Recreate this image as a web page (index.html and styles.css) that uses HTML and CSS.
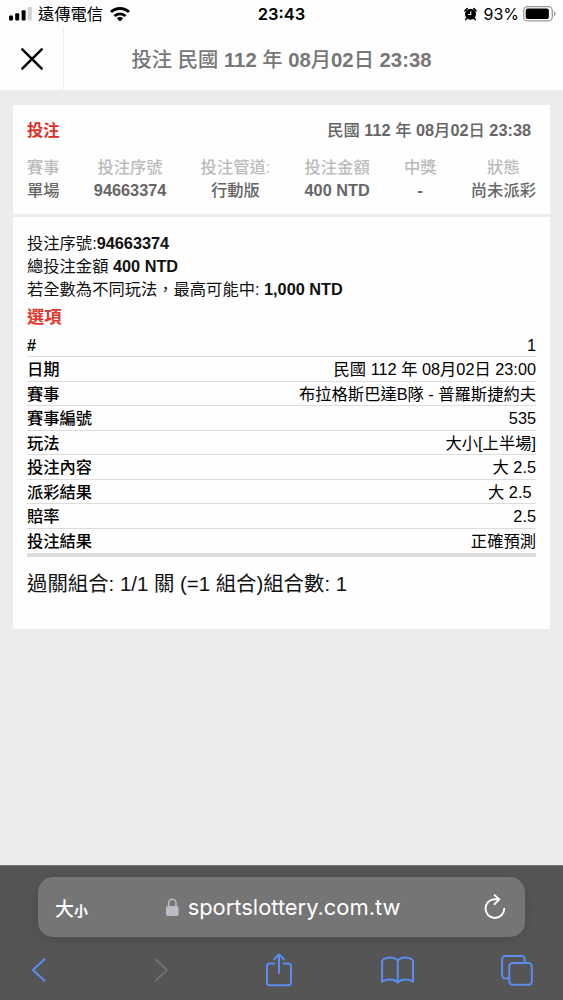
FILE: index.html
```html
<!DOCTYPE html>
<html lang="zh-Hant">
<head>
  <meta charset="UTF-8" />
  <meta name="viewport" content="width=device-width, initial-scale=1.0"/>
  <title>投注</title>
  <link rel="stylesheet" href="styles.css">
</head>
<body>
  <div class="statusbar">
    <div class="carrier">
      <svg class="signal" width="23" height="14" viewBox="0 0 23 14">
        <rect x="0" y="8.5" width="4" height="5" rx="1"/>
        <rect x="6.2" y="6.3" width="4" height="7.2" rx="1"/>
        <rect x="12.6" y="3.3" width="4" height="10.2" rx="1"/>
        <rect x="18.8" y="0" width="4" height="13.5" rx="1" fill="#d0d0d0"/>
      </svg>
      <span>遠傳電信</span>
      <svg class="wifi" width="20" height="15" viewBox="0 0 20 15">
        <g fill="none" stroke="#000" stroke-width="2.8">
          <path d="M1 5.1a13 13 0 0 1 18 0"/>
          <path d="M4.5 9a8 8 0 0 1 11 0"/>
        </g>
        <path d="M10 14.6 6.8 11.3a4.6 4.6 0 0 1 6.4 0z"/>
      </svg>
    </div>
    <div class="clock">23:43</div>
    <div class="power">
      <svg width="13" height="14" viewBox="0 0 14 14">
        <circle cx="7" cy="7.2" r="5.9"/>
        <path d="M1 3.6 3.4 1.2M13 3.6 10.6 1.2M3.2 11.5 1.9 13M10.8 11.5l1.3 1.5" stroke="#000" stroke-width="1.7" stroke-linecap="round"/>
        <path d="M7.3 4v3.6H4.4" fill="none" stroke="#fff" stroke-width="1.1"/>
      </svg>
      <span>93%</span>
      <svg class="battery" width="33" height="16" viewBox="0 0 33 16">
        <rect x=".7" y=".7" width="28.6" height="14.2" rx="4" fill="none" stroke="#999" stroke-width="1.3"/>
        <rect x="2.7" y="2.5" width="23.2" height="10.6" rx="2.2"/>
        <path d="M31 5.3c2 .8 2 4.2 0 5z" fill="#999"/>
      </svg>
    </div>
  </div>

  <div class="header">
    <button class="close">
      <svg width="24" height="24" viewBox="0 0 24 24">
        <path d="M2.3 2.3 21.7 21.7M21.7 2.3 2.3 21.7" stroke="#000" stroke-width="2.5" stroke-linecap="round"/>
      </svg>
    </button>
    <h1>投注 民國 <b>112</b> 年 <b>08</b>月<b>02</b>日 <b>23:38</b></h1>
  </div>

  <div class="main">
    <div class="card">
      <div class="summary">
        <div class="summary-top">
          <span class="red">投注</span>
          <span class="date">民國 <b>112</b> 年 <b>08</b>月<b>02</b>日 <b>23:38</b></span>
        </div>
        <div class="columns">
          <div class="col"><span>賽事</span><em>單場</em></div>
          <div class="col"><span>投注序號</span><b>94663374</b></div>
          <div class="col"><span>投注管道:</span><em>行動版</em></div>
          <div class="col"><span>投注金額</span><b>400 NTD</b></div>
          <div class="col"><span>中獎</span><b>-</b></div>
          <div class="col"><span>狀態</span><em>尚未派彩</em></div>
        </div>
      </div>

      <div class="details">
        <p>投注序號:<b>94663374</b></p>
        <p>總投注金額 <b>400 NTD</b></p>
        <p>若全數為不同玩法，最高可能中: <b>1,000 NTD</b></p>
        <h2>選項</h2>
        <div class="rows">
          <div class="row"><b>#</b><span>1</span></div>
          <div class="row"><em>日期</em><span>民國 112 年 08月02日 23:00</span></div>
          <div class="row"><em>賽事</em><span>布拉格斯巴達B隊 - 普羅斯捷約夫</span></div>
          <div class="row"><em>賽事編號</em><span>535</span></div>
          <div class="row"><em>玩法</em><span>大小[上半場]</span></div>
          <div class="row"><em>投注內容</em><span>大 2.5</span></div>
          <div class="row"><em>派彩結果</em><span>大 2.5&nbsp;</span></div>
          <div class="row"><em>賠率</em><span>2.5</span></div>
          <div class="row"><em>投注結果</em><span>正確預測</span></div>
        </div>
        <div class="combo">過關組合: 1/1 關 (=1 組合)組合數: 1</div>
      </div>
    </div>
  </div>

  <div class="browser">
    <div class="address">
      <div class="textsize">大<small>小</small></div>
      <div class="url">
        <svg width="13" height="19" viewBox="0 0 13 19">
          <rect x="0" y="8" width="12.6" height="10" rx="1.8" fill="#bcbbc3"/>
          <path d="M2.6 8.5V5a3.7 3.7 0 0 1 7.4 0v3.5" fill="none" stroke="#bcbbc3" stroke-width="1.6"/>
        </svg>
        <span>sportslottery.com.tw</span>
      </div>
      <svg class="reload" width="22" height="26" viewBox="0 0 22 26" fill="none" stroke="#fff" stroke-width="1.9" stroke-linecap="round" stroke-linejoin="round">
        <path d="M20.3 14.6a9.4 9.4 0 1 1-9.4-9.4h4.2"/>
        <path d="M10.6 1.1l4.7 4.3-4.7 4.8"/>
      </svg>
    </div>
    <div class="toolbar">
      <svg width="34" height="26" viewBox="-9 0 34 26"><path d="M14 1.7 2 13l12 11.3"/></svg>
      <svg class="disabled" width="34" height="26" viewBox="-12 0 34 26"><path d="M2 1.7 14 13 2 24.3"/></svg>
      <svg width="34" height="34" viewBox="-4 0 34 34">
        <path d="M10 10.5H5a3 3 0 0 0-3 3v15.8a3 3 0 0 0 3 3h18a3 3 0 0 0 3-3V13.5a3 3 0 0 0-3-3h-5"/>
        <path d="M14 21V1.8M8.6 6.8 14 1.5l5.400 5.300"/>
      </svg>
      <svg width="34" height="28" viewBox="-.8 0 34 28">
        <path d="M17 26.5V4.600C13.500.3 5 .5 1.300 4.600V25.800C5.500 22.800 13 22.500 17 26.500 21 22.500 28.500 22.800 32.200 25.800V4.600C29 .5 20.500.3 17 4.600"/>
      </svg>
      <svg width="34" height="31" viewBox="-2 0 34 31">
        <path d="M8.3 23.500H4.300a3.200 3.200 0 0 1-3.200-3.200V4.300A3.200 3.200 0 0 1 4.300 1.100H20.500a3.200 3.200 0 0 1 3.200 3.200V8"/>
        <rect x="8.3" y="8" width="22.5" height="21.8" rx="3.2"/>
      </svg>
    </div>
  </div>
</body>
</html>
```

FILE: styles.css
```css
* {
  box-sizing: border-box;
}

body {
  margin: 0;
  height: 1000px;
  display: flex;
  flex-direction: column;
  overflow: hidden;
  background: #ececec;
  color: #111;
  font-family: "Liberation Sans", "Noto Sans CJK TC", sans-serif;
  font-size: 16.3px;
}

svg {
  display: block;
  flex-shrink: 0;
}

em {
  font-style: normal;
  font-weight: 500;
}

.statusbar {
  height: 28px;
  padding: 0 7px 0 9px;
  display: grid;
  grid-template-columns: 1fr auto 1fr;
  align-items: center;
  background: #fdfdfd;
  color: #000;
  font-family: Inter, "Noto Sans CJK TC", sans-serif;
  font-size: 16.3px;
  line-height: 28px;
}

.carrier,
.power {
  display: flex;
  align-items: center;
}

.carrier span {
  margin: 0 7px 0 6px;
}

.clock {
  margin-right: 2px;
  font-weight: 600;
  font-size: 16.5px;
}

.power {
  justify-content: flex-end;
}

.power span {
  margin: 0 4px 0 6px;
  font-size: 16px;
}

.header {
  height: 62px;
  display: flex;
  background: #fdfdfd;
}

.close {
  width: 64px;
  padding: 0;
  display: flex;
  align-items: center;
  justify-content: center;
  background: none;
  border: none;
  border-right: 1px solid #eee;
}

.header h1 {
  flex: 1;
  margin: 0;
  padding-right: 64px;
  color: #777;
  font-size: 20.3px;
  font-weight: 500;
  line-height: 64px;
  text-align: center;
}

.main {
  flex: 1;
  padding: 15px 13px;
}

.card {
  height: 524px;
  background: #fefefe;
}

.summary {
  height: 112px;
  padding: 13px 14px 0;
  border-bottom: 3px solid #ececec;
}

.summary-top {
  display: flex;
  justify-content: space-between;
  padding-right: 5px;
  font-weight: 500;
  line-height: 24px;
}

.red {
  color: #dc2f25;
  font-weight: bold;
}

.date {
  color: #666;
}

.columns {
  display: flex;
  justify-content: space-between;
  margin-top: 14px;
}

.col {
  display: flex;
  flex-direction: column;
  align-items: center;
  line-height: 23px;
}

.col span {
  color: #bbb;
  font-weight: 500;
}

.col b,
.col em {
  color: #666;
}

.details {
  padding: 15px 14px 0;
}

.details p {
  margin: 0;
  line-height: 23px;
}

.details h2 {
  margin: 0;
  color: #e0372c;
  font-size: 17.3px;
  line-height: 32px;
}

.rows {
  border-bottom: 4px solid #dcdcdc;
  color: #000;
}

.row {
  height: 24.45px;
  display: flex;
  justify-content: space-between;
  border-bottom: 1px solid #dcdcdc;
  line-height: 24px;
}

.row:last-child {
  border-bottom: none;
}

.combo {
  margin-top: 11px;
  font-size: 20.4px;
  line-height: 32px;
}

.browser {
  height: 135px;
  padding: 11px 38px 0;
  background: #555;
  border-top: 1px solid #777;
}

.address {
  height: 60px;
  padding: 0 19px 0 17px;
  display: grid;
  grid-template-columns: 1fr auto 1fr;
  align-items: center;
  background: #757575;
  border-radius: 15px;
  box-shadow: 0 2px 14px rgba(0, 0, 0, 0.13);
  color: #fff;
}

.textsize {
  font-size: 19px;
  font-weight: 500;
}

.textsize small {
  font-size: 14px;
  font-weight: bold;
}

.url {
  padding-left: 5px;
  display: flex;
  align-items: center;
  gap: 9px;
  font-family: Inter, sans-serif;
  font-size: 21.9px;
}

.reload {
  justify-self: end;
}

.toolbar {
  height: 66px;
  margin: 0 -8px 0 -16px;
  display: flex;
  align-items: center;
  justify-content: space-between;
  fill: none;
  stroke: #5b8def;
  stroke-width: 2;
  stroke-linejoin: round;
}

.toolbar .disabled {
  stroke: #707070;
}
```
